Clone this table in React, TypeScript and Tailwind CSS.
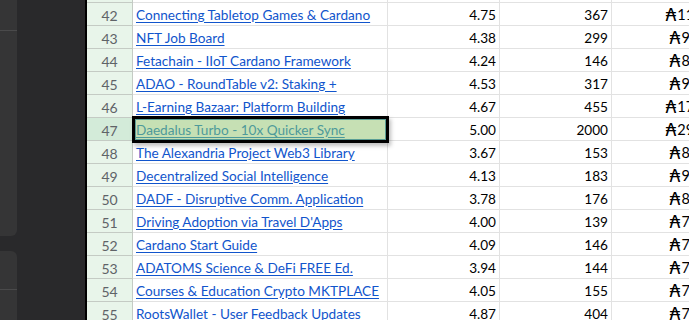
import React from "react";

type Row = { n: number; title: string; score: string; votes: string; ada: string };

const rows: Row[] = [
  { n: 41, title: "Cardano Community Hub", score: "4.50", votes: "210", ada: "9,120" },
  { n: 42, title: "Connecting Tabletop Games & Cardano", score: "4.75", votes: "367", ada: "11,400" },
  { n: 43, title: "NFT Job Board", score: "4.38", votes: "299", ada: "9,500" },
  { n: 44, title: "Fetachain - IIoT Cardano Framework", score: "4.24", votes: "146", ada: "8,250" },
  { n: 45, title: "ADAO - RoundTable v2: Staking +", score: "4.53", votes: "317", ada: "9,800" },
  { n: 46, title: "L-Earning Bazaar: Platform Building", score: "4.67", votes: "455", ada: "17,200" },
  { n: 47, title: "Daedalus Turbo - 10x Quicker Sync", score: "5.00", votes: "2000", ada: "29,500" },
  { n: 48, title: "The Alexandria Project Web3 Library", score: "3.67", votes: "153", ada: "8,100" },
  { n: 49, title: "Decentralized Social Intelligence", score: "4.13", votes: "183", ada: "9,000" },
  { n: 50, title: "DADF - Disruptive Comm. Application", score: "3.78", votes: "176", ada: "8,400" },
  { n: 51, title: "Driving Adoption via Travel D'Apps", score: "4.00", votes: "139", ada: "7,500" },
  { n: 52, title: "Cardano Start Guide", score: "4.09", votes: "146", ada: "7,200" },
  { n: 53, title: "ADATOMS Science & DeFi FREE Ed.", score: "3.94", votes: "144", ada: "7,000" },
  { n: 54, title: "Courses & Education Crypto MKTPLACE", score: "4.05", votes: "155", ada: "7,600" },
  { n: 55, title: "RootsWallet - User Feedback Updates", score: "4.87", votes: "404", ada: "7,900" },
];

const SELECTED = 47;

export default function App() {
  return (
    <div
      className="flex w-[689px] h-[320px] overflow-hidden bg-white"
      style={{ fontFamily: "Lato, 'DejaVu Sans', sans-serif" }}
    >
      {/* left dark sidebar */}
      <div className="flex w-[85px] shrink-0 bg-[#29292b]">
        <div className="flex flex-col w-[17px] shrink-0">
          <div className="h-[236px] bg-[#353536] rounded-br-[6px] flex flex-col">
            <div className="h-[31px] border-b border-[#4a4a4b]" />
          </div>
          <div className="mt-[15px] flex-1 bg-[#353536] rounded-tr-[6px] flex flex-col">
            <div className="h-[39px] border-b border-[#4a4a4b]" />
          </div>
        </div>
      </div>
      <div className="w-[2px] shrink-0 bg-black" />

      {/* sheet */}
      <div className="flex-1 overflow-hidden">
        <div className="-mt-[20px]">
          {rows.map((r) => {
            const sel = r.n === SELECTED;
            return (
              <div key={r.n} className="flex h-[23px] text-[13.6px] leading-none">
                <div
                  className={`w-[46px] shrink-0 flex items-center justify-center pt-[3px] border-r border-b border-[#c4cbc4] text-[#5f6368] text-[14px] ${
                    sel ? "bg-[#d3ebd9]" : "bg-[#e8f5ea]"
                  }`}
                >
                  {r.n}
                </div>
                <div className="relative w-[255px] shrink-0 border-r border-b border-[#e2e2e2] flex items-center px-[3px] pt-[3px] whitespace-nowrap">
                  {sel && (
                    <div className="absolute -left-[1px] -top-[2px] w-[257px] h-[27px] border-[3px] border-black bg-[#c6e0b4] shadow-[2px_3px_4px_rgba(0,0,0,0.25)] z-10">
                      <div className="h-full w-full border border-[#5a9e95]" />
                    </div>
                  )}
                  <span
                    className={`relative z-20 underline underline-offset-[2px] ${
                      sel ? "text-[#4e9a9a]" : "text-[#1155cc]"
                    }`}
                  >
                    {r.title}
                  </span>
                </div>
                <div className="w-[112px] shrink-0 border-r border-b border-[#e2e2e2] flex items-center justify-end px-[3px] pt-[3px] text-black">
                  {r.score}
                </div>
                <div className="w-[112px] shrink-0 border-r border-b border-[#e2e2e2] flex items-center justify-end px-[3px] pt-[3px] text-black">
                  {r.votes}
                </div>
                <div className="w-[160px] shrink-0 border-b border-[#e2e2e2] flex items-center justify-center pl-[4px] pt-[3px] text-black whitespace-nowrap">
                  <span className="text-[17px] font-['DejaVu_Sans'] mr-[1px]">₳</span>
                  <span className="text-[14.5px]">{r.ada}</span>
                </div>
              </div>
            );
          })}
        </div>
      </div>
    </div>
  );
}
